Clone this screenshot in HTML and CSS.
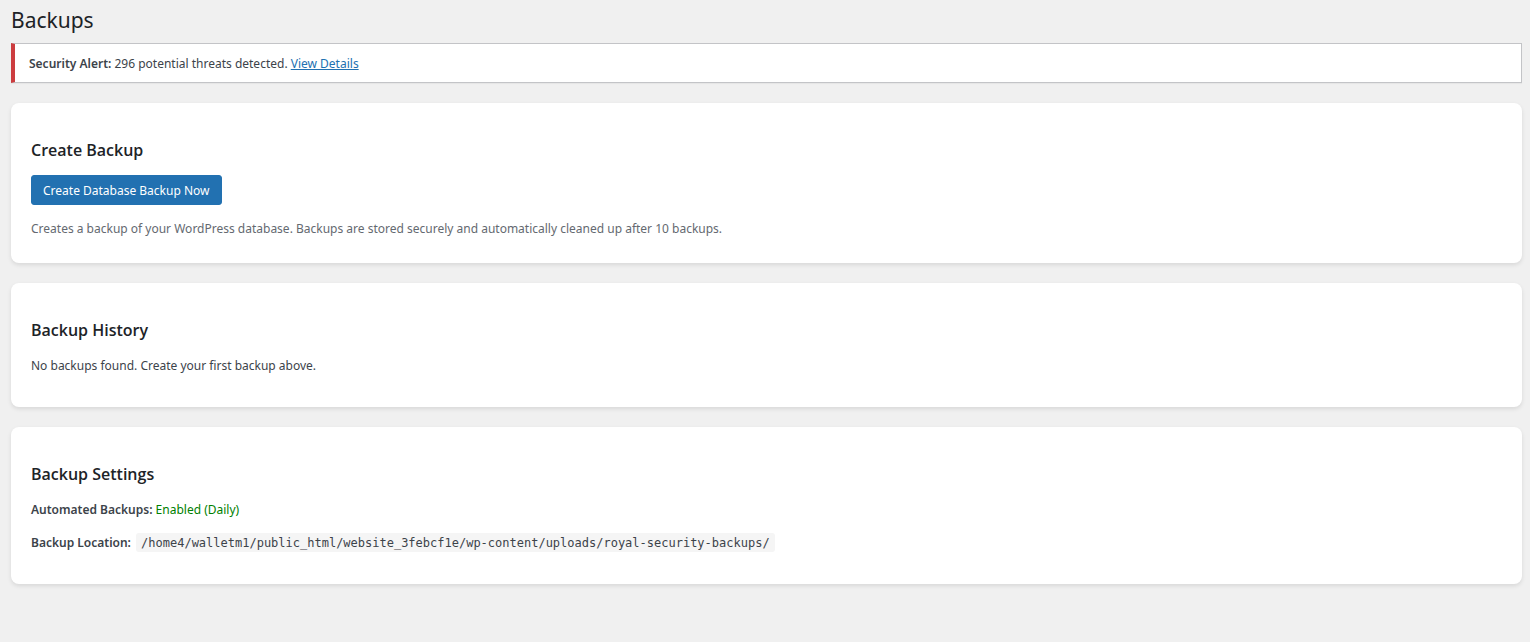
FILE: index.html
```html
<!DOCTYPE html>
<html lang="en">
<head>
    <meta charset="UTF-8">
    <meta name="viewport" content="width=device-width, initial-scale=1.0">
    <title>Backups</title>
    <link rel="stylesheet" href="styles.css">
</head>
<body>
    <main class="wrap">
        <h1>Backups</h1>

        <div class="notice notice-error">
            <p><strong>Security Alert:</strong> 296 potential threats detected. <a href="#">View Details</a></p>
        </div>

        <section class="card">
            <h2>Create Backup</h2>
            <button type="button" class="button-primary">Create Database Backup Now</button>
            <p class="description">Creates a backup of your WordPress database. Backups are stored securely and automatically cleaned up after 10 backups.</p>
        </section>

        <section class="card">
            <h2>Backup History</h2>
            <p>No backups found. Create your first backup above.</p>
        </section>

        <section class="card">
            <h2>Backup Settings</h2>
            <p><strong>Automated Backups:</strong> <span class="status-enabled">Enabled (Daily)</span></p>
            <p><strong>Backup Location:</strong> <code>/home4/walletm1/public_html/website_3febcf1e/wp-content/uploads/royal-security-backups/</code></p>
        </section>
    </main>
</body>
</html>
```

FILE: styles.css
```css
* {
    box-sizing: border-box;
}

body {
    margin: 0;
    background: #f0f0f0;
    color: #3c434a;
    font-family: "Noto Sans", sans-serif;
    font-size: 12px;
    line-height: 22px;
}

.wrap {
    padding: 5px 8px 20px 11px;
}

h1 {
    margin: 0 0 8px;
    color: #1d2327;
    font-size: 21px;
    font-weight: 400;
    line-height: 30px;
}

h2 {
    margin: 15px 0 13px;
    color: #1d2327;
    font-family: "Open Sans", sans-serif;
    font-size: 16px;
    font-weight: 600;
    line-height: 24px;
}

p {
    margin: 0 0 11px;
}

strong {
    font-weight: 600;
}

a {
    color: #2271b1;
}

.notice {
    padding: 9px 14px 7px;
    margin-bottom: 20px;
    background: #fff;
    border: 1px solid #c3c4c7;
    box-shadow: 0 1px 1px rgba(0, 0, 0, 0.04);
}

.notice-error {
    border-left: 4px solid #cc3d3f;
}

.notice p {
    margin: 0;
}

.card {
    padding: 20px 20px 19px;
    margin-bottom: 20px;
    background: #fff;
    border-radius: 8px;
    box-shadow: 0 2px 4px rgba(0, 0, 0, 0.1);
}

.button-primary {
    display: block;
    height: 30px;
    padding: 0 11px;
    margin-bottom: 13px;
    background: #2271b1;
    border: 1px solid #2271b1;
    border-radius: 3px;
    color: #fff;
    font-family: inherit;
    font-size: 12px;
    cursor: pointer;
}

.description {
    margin-bottom: 4px;
    color: #646970;
}

.status-enabled {
    color: green;
}

code {
    padding: 3px 5px 2px;
    margin: 0 1px 0 2px;
    background: #f5f5f5;
    border-radius: 3px;
    font-family: "DejaVu Sans Mono", monospace;
    font-size: 12px;
}
```
